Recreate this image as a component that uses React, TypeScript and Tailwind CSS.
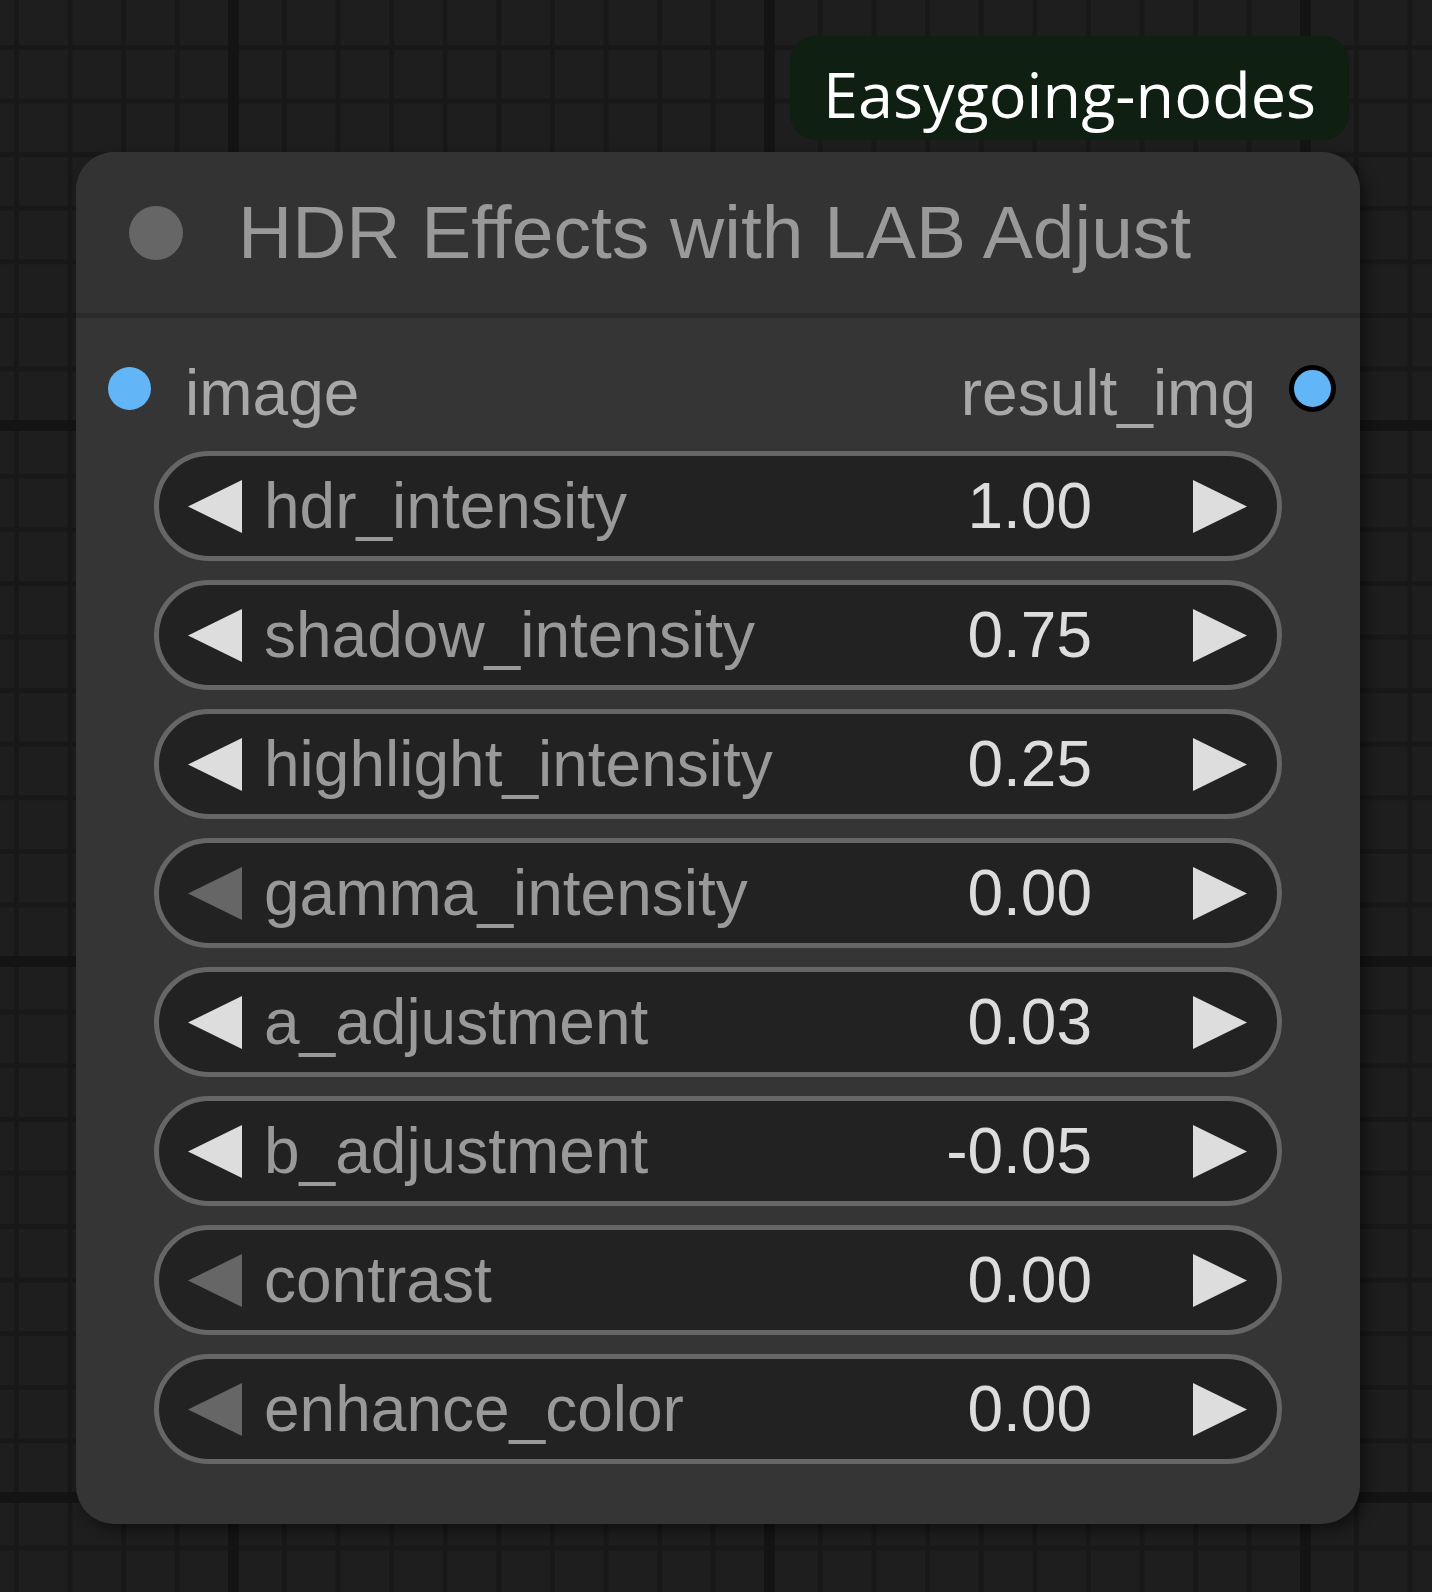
const widgets = [
  { name: 'hdr_intensity', value: '1.00', atMin: false },
  { name: 'shadow_intensity', value: '0.75', atMin: false },
  { name: 'highlight_intensity', value: '0.25', atMin: false },
  { name: 'gamma_intensity', value: '0.00', atMin: true },
  { name: 'a_adjustment', value: '0.03', atMin: false },
  { name: 'b_adjustment', value: '-0.05', atMin: false },
  { name: 'contrast', value: '0.00', atMin: true },
  { name: 'enhance_color', value: '0.00', atMin: true },
];

function Arrow({ dir, dim }: { dir: 'left' | 'right'; dim?: boolean }) {
  return (
    <svg width="54" height="53" viewBox="0 0 54 53" className="shrink-0">
      <path d={dir === 'left' ? 'M0 26.5L54 0v53z' : 'M54 26.5L0 0v53z'} fill={dim ? '#666666' : '#dddddd'} />
    </svg>
  );
}

function NumberWidget({ name, value, atMin }: { name: string; value: string; atMin: boolean }) {
  return (
    <div className="h-[110px] rounded-full border-[5px] border-[#666] bg-[#222] flex items-center pl-[29px] pr-[30px]">
      <Arrow dir="left" dim={atMin} />
      <span className="ml-[22px] text-[64px] text-[#999] leading-none">{name}</span>
      <span className="ml-auto text-[64px] text-[#ddd] leading-none">{value}</span>
      <span className="ml-[101px] flex">
        <Arrow dir="right" />
      </span>
    </div>
  );
}

export default function App() {
  return (
    <div className="relative w-[1432px] h-[1592px] overflow-hidden font-['Liberation_Sans',Arial,sans-serif] bg-[#1e1e1e] bg-[linear-gradient(90deg,#141414_11px,transparent_11px),linear-gradient(180deg,#141414_11px,transparent_11px),linear-gradient(90deg,#181818_5px,transparent_5px),linear-gradient(180deg,#181818_5px,transparent_5px)] bg-[size:536px_536px,536px_536px,53.6px_53.6px,53.6px_53.6px] bg-[position:228px_0,0_420px,14px_0,0_45px]">
      {/* group badge */}
      <div className="absolute left-[790px] top-[36px] w-[559px] h-[104px] rounded-[26px] bg-[#0f1f11] flex items-center justify-center">
        <span className="font-['Open_Sans',sans-serif] text-[63px] text-white leading-none pt-[10px]">Easygoing-nodes</span>
      </div>

      {/* node */}
      <div className="absolute left-[76px] top-[152px] w-[1284px] h-[1372px] rounded-[38px] bg-[#353535] shadow-[6px_6px_14px_rgba(0,0,0,0.45)] overflow-hidden flex flex-col">
        <div className="h-[161px] bg-[#333] flex items-center pl-[53px] shrink-0">
          <div className="w-[54px] h-[54px] rounded-full bg-[#666]" />
          <span className="ml-[55px] text-[75px] text-[#999] leading-none">HDR Effects with LAB Adjust</span>
        </div>
        <div className="h-[5px] bg-[#2a2a2a] shrink-0" />

        <div className="pt-[38px] flex flex-col">
          <div className="h-[64px] flex items-center pl-[32px] pr-[24px]">
            <div className="w-[43px] h-[43px] rounded-full bg-[#62b6f7]" />
            <span className="ml-[34px] mt-[10px] text-[64px] text-[#a8a8a8] leading-none">image</span>
            <span className="ml-auto mt-[10px] text-[64px] text-[#a8a8a8] leading-none">result_img</span>
            <div className="ml-[33px] w-[47px] h-[47px] rounded-full bg-[#62b6f7] border-[5px] border-black" />
          </div>

          <div className="mt-[31px] px-[78px] flex flex-col gap-[19px]">
            {widgets.map((w) => (
              <NumberWidget key={w.name} {...w} />
            ))}
          </div>
        </div>
      </div>
    </div>
  );
}
